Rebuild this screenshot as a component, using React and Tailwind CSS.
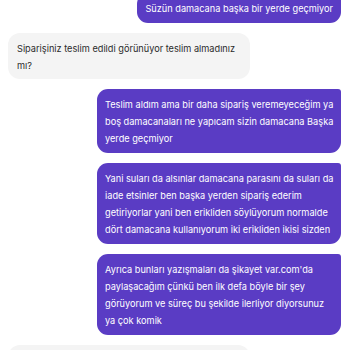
const purple = "bg-[#5a3cc4] text-white rounded-[11px] rounded-tr-[3px] px-[8px] py-[6.5px] whitespace-nowrap";

function Lines({ lines }) {
  return lines.map((l, i) => <div key={i}>{l}</div>);
}

export default function App() {
  return (
    <div className="w-[350px] h-[350px] overflow-hidden bg-white" style={{ fontFamily: "Inter, 'Noto Sans', sans-serif" }}>
      <div className="flex flex-col gap-[10px] pl-[8px] pr-[9px] text-[9.2px] leading-[17px]">
        <div className="flex justify-end -mt-[7px]">
          <div className={`${purple}`}>Süzün damacana başka bir yerde geçmiyor</div>
        </div>
        <div className="flex justify-start">
          <div className="bg-[#f4f4f4] text-[#2b2b2b] rounded-[12px] pl-[9px] pr-[8px] pt-[7px] pb-[5px] w-[242px] whitespace-nowrap">
            <Lines lines={["Siparişiniz teslim edildi görünüyor teslim almadınız", "mı?"]} />
          </div>
        </div>
        <div className="flex justify-end">
          <div className={`${purple} w-[244px]`}>
            <Lines lines={[
              "Teslim aldım ama bir daha sipariş veremeyeceğim ya",
              "boş damacanaları ne yapıcam sizin damacana Başka",
              "yerde geçmiyor",
            ]} />
          </div>
        </div>
        <div className="flex justify-end">
          <div className={`${purple} w-[244px]`}>
            <Lines lines={[
              "Yani suları da alsınlar damacana parasını da suları da",
              "iade etsinler ben başka yerden sipariş ederim",
              "getiriyorlar yani ben erikliden söylüyorum normalde",
              "dört damacana kullanıyorum iki erikliden ikisi sizden",
            ]} />
          </div>
        </div>
        <div className="flex justify-end">
          <div className={`${purple} w-[244px]`}>
            <Lines lines={[
              "Ayrıca bunları yazışmaları da şikayet var.com'da",
              "paylaşacağım çünkü ben ilk defa böyle bir şey",
              "görüyorum ve süreç bu şekilde ilerliyor diyorsunuz",
              "ya çok komik",
            ]} />
          </div>
        </div>
        <div className="flex justify-start">
          <div className="bg-[#f4f4f4] rounded-[12px] w-[242px] h-[30px]" />
        </div>
      </div>
    </div>
  );
}
